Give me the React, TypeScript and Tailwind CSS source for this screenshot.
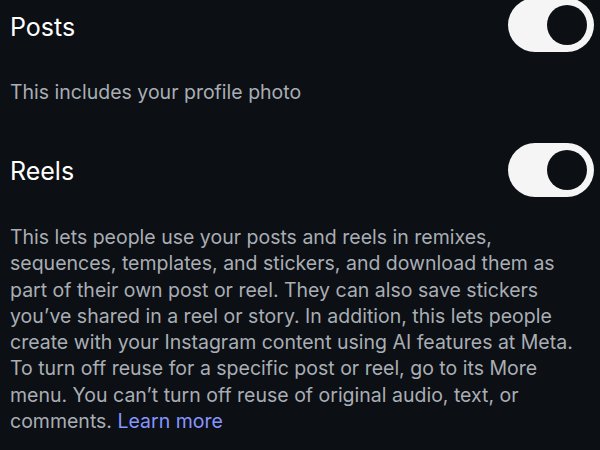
import { useState } from 'react';

function Toggle({ on, onChange }: { on: boolean; onChange: () => void }) {
  return (
    <button
      type="button"
      onClick={onChange}
      className={`w-[86px] h-[54px] rounded-full p-[7px] flex items-center shrink-0 ${on ? 'bg-[#f5f5f5] justify-end' : 'bg-[#3a3d42] justify-start'}`}
    >
      <span className="w-[40px] h-[40px] rounded-full bg-[#0c0f14] block" />
    </button>
  );
}

const reelsLines = [
  'This lets people use your posts and reels in remixes,',
  'sequences, templates, and stickers, and download them as',
  'part of their own post or reel. They can also save stickers',
  'you’ve shared in a reel or story. In addition, this lets people',
  'create with your Instagram content using AI features at Meta.',
  'To turn off reuse for a specific post or reel, go to its More',
  'menu. You can’t turn off reuse of original audio, text, or',
];

export default function App() {
  const [posts, setPosts] = useState(true);
  const [reels, setReels] = useState(true);

  return (
    <div className="w-[600px] h-[450px] overflow-hidden bg-[#0c0f14] pl-[10px] pr-[6px] font-['Inter',sans-serif]">
      <div className="flex items-center justify-between -mt-[2px]">
        <span className="text-[25px] text-white pt-[5px]">Posts</span>
        <Toggle on={posts} onChange={() => setPosts(!posts)} />
      </div>
      <p className="mt-[27px] text-[19.5px] leading-[26px] text-[#a9aeb5]">This includes your profile photo</p>

      <div className="flex items-center justify-between mt-[38px]">
        <span className="text-[25px] text-white pt-[4px]">Reels</span>
        <Toggle on={reels} onChange={() => setReels(!reels)} />
      </div>
      <p className="mt-[27px] text-[19.5px] leading-[26.3px] text-[#a9aeb5] whitespace-nowrap">
        {reelsLines.map((line) => (
          <span key={line} className="block">{line}</span>
        ))}
        <span className="block">
          comments. <a className="text-[#8796ff]">Learn more</a>
        </span>
      </p>
    </div>
  );
}
